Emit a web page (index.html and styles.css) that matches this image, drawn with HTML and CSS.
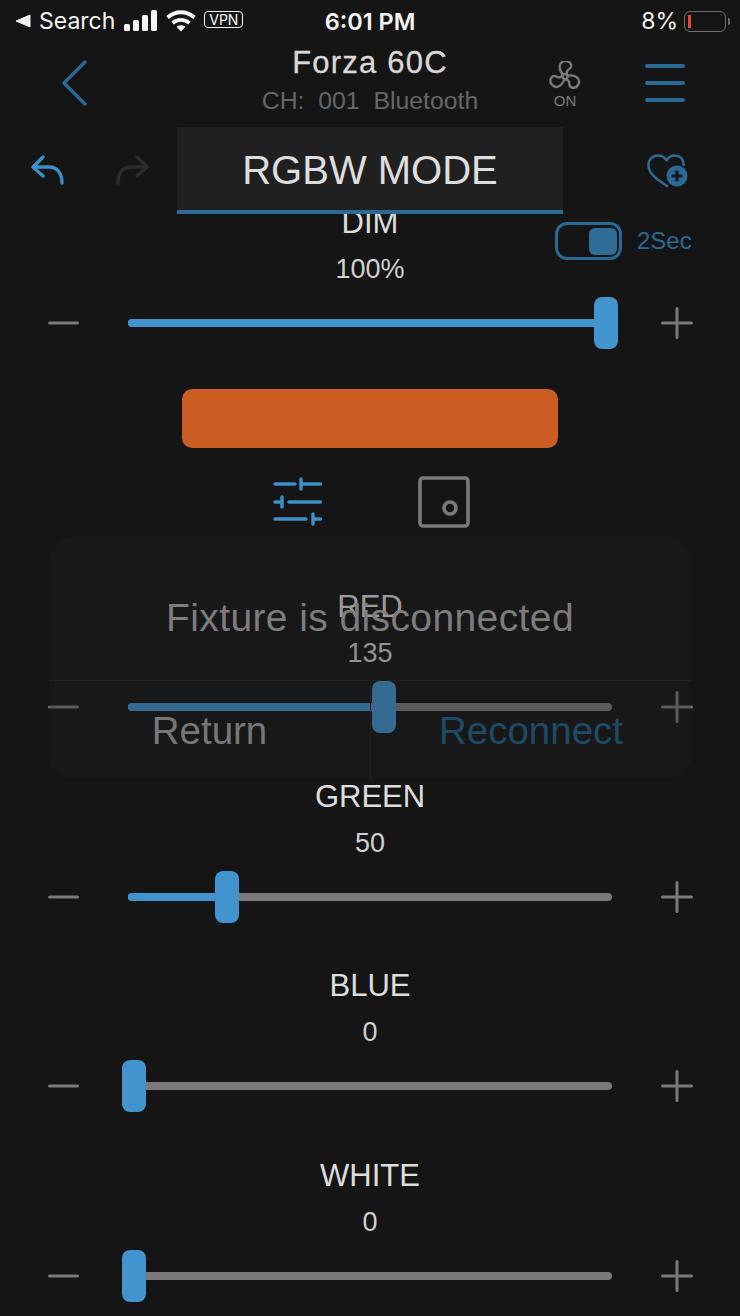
FILE: index.html
```html
<!DOCTYPE html>
<html lang="en">

<head>
    <meta charset="UTF-8">
    <meta name="viewport" content="width=device-width, initial-scale=1.0">
    <title>Forza 60C</title>
    <link rel="stylesheet" href="styles.css">
</head>

<body>
    <div class="screen">
        <div class="status-bar">
            <div class="status-left">
                <svg class="back-tri" width="16" height="14" viewBox="0 0 16 14"><path d="M15 1V13L1 7Z" fill="#f2f2f2" stroke="#f2f2f2" stroke-linejoin="round"/></svg>
                <span>Search</span>
                <svg class="signal" width="34" height="22" viewBox="0 0 34 22" fill="#f5f5f5">
                    <rect x="0" y="14" width="6" height="7" rx="1.5"/>
                    <rect x="9" y="10" width="6" height="11" rx="1.5"/>
                    <rect x="18" y="5" width="6" height="16" rx="1.5"/>
                    <rect x="27" y="0" width="6" height="21" rx="1.5"/>
                </svg>
                <svg class="wifi" width="30" height="22" viewBox="0 0 30 22" fill="none" stroke="#f5f5f5" stroke-width="3.8">
                    <path d="M1.500 7.500C9.500 0.500 20.500 0.500 28.500 7.500"/>
                    <path d="M6.500 13C11.500 8.800 18.500 8.800 23.500 13"/>
                    <path d="M15 21.500L10.500 16.800C13 14.800 17 14.800 19.500 16.800Z" fill="#f5f5f5" stroke="none"/>
                </svg>
                <span class="vpn">VPN</span>
            </div>
            <div class="status-time">6:01 PM</div>
            <div class="status-right">
                <span>8%</span>
                <div class="battery"><div class="battery-level"></div></div>
                <div class="battery-nub"></div>
            </div>
        </div>

        <div class="nav">
            <div class="nav-left">
                <svg width="26" height="46" viewBox="0 0 26 46" fill="none" stroke="#2a6a94" stroke-width="3.2" stroke-linecap="round" stroke-linejoin="round"><path d="M23 2L2 23L23 44"/></svg>
            </div>
            <div class="nav-title">
                <div class="device-name">Forza 60C</div>
                <div class="device-sub">CH:&nbsp;&nbsp;001&nbsp;&nbsp;Bluetooth</div>
            </div>
            <div class="nav-right">
                <div class="fan">
                    <svg width="32" height="30" viewBox="-15 -14.500 30 28" fill="none" stroke="#7a7a7a" stroke-width="2.2" stroke-linejoin="round">
                        <circle cx="0" cy="0" r="2.4"/>
                        <path id="blade" d="M-2 -2C-6 -6 -6.500 -14 0 -14.500C5.500 -15 7.500 -9 4 -7C2 -6 1 -4 2.300 -1.200"/>
                        <use href="#blade" transform="rotate(120)"/>
                        <use href="#blade" transform="rotate(240)"/>
                    </svg>
                    <span>ON</span>
                </div>
                <div class="menu"><i></i><i></i><i></i></div>
            </div>
        </div>

        <div class="tools">
            <svg class="undo" width="33" height="30" viewBox="0 0 33 30" fill="none" stroke="#3c8fc8" stroke-width="3.4" stroke-linecap="round" stroke-linejoin="round"><path d="M12 2L2 12L12 21M2 12H18C26 12 31 18 31 28"/></svg>
            <svg class="redo" width="33" height="30" viewBox="0 0 33 30" fill="none" stroke="#2b2b2b" stroke-width="3.4" stroke-linecap="round" stroke-linejoin="round"><path d="M21 2L31 12L21 21M31 12H15C7 12 2 18 2 28"/></svg>
            <div class="mode-tab">RGBW MODE</div>
            <svg class="fav" width="44" height="38" viewBox="0 0 44 38" fill="none" stroke="#2a6a94" stroke-width="2.6" stroke-linecap="round" stroke-linejoin="round">
                <path d="M20 33C13 28 2 22 1.500 13C1 6 6 2.500 11 2.500C15 2.500 18 4.500 19.500 7.500C21 4.500 24 2.500 28 2.500C33 2.500 37 6 36.500 12"/>
                <circle cx="30" cy="23" r="10.500" stroke="none" fill="#2a6a94"/>
                <path d="M30 17.500V28.500M24.500 23H35.500" stroke="#121a20" stroke-width="3.200" stroke-linecap="butt"/>
            </svg>
        </div>

        <div class="channel channel-dim">
            <div class="channel-name">DIM</div>
            <div class="channel-value">100%</div>
            <div class="fade-toggle">
                <div class="switch"><div class="switch-knob"></div></div>
                <span>2Sec</span>
            </div>
            <div class="slider-row">
                <svg class="step" width="31" height="32" viewBox="0 0 31 32"><path d="M1.500 16H29.500" stroke="#7a7a7a" stroke-width="3" stroke-linecap="round"/></svg>
                <div class="track">
                    <div class="fill" style="width: 478px"></div>
                    <div class="thumb" style="left: 466px"></div>
                </div>
                <svg class="step" width="32" height="32" viewBox="0 0 32 32"><path d="M1.500 16H30.500M16 1.500V30.500" stroke="#7a7a7a" stroke-width="3" stroke-linecap="round"/></svg>
            </div>
        </div>

        <div class="swatch"></div>

        <div class="mode-icons">
            <svg width="50" height="50" viewBox="0 0 50 50" fill="none" stroke="#3c8fc8" stroke-width="3.500" stroke-linecap="round">
                <path d="M2 7H22M28 2V12M28 7H47.500"/>
                <path d="M2 25H9M9 20V30M16 25H47.500"/>
                <path d="M2 42H33M40 37V47M40 42H47.500"/>
            </svg>
            <svg width="52" height="52" viewBox="0 0 52 52" fill="none" stroke="#7a7a7a" stroke-width="3.600">
                <rect x="2" y="2" width="48" height="48" rx="3"/>
                <circle cx="32" cy="32" r="6"/>
            </svg>
        </div>

        <div class="channel">
            <div class="channel-name">RED</div>
            <div class="channel-value">135</div>
            <div class="slider-row">
                <svg class="step" width="31" height="32" viewBox="0 0 31 32"><path d="M1.500 16H29.500" stroke="#7a7a7a" stroke-width="3" stroke-linecap="round"/></svg>
                <div class="track">
                    <div class="fill" style="width: 256px"></div>
                    <div class="thumb" style="left: 244px"></div>
                </div>
                <svg class="step" width="32" height="32" viewBox="0 0 32 32"><path d="M1.500 16H30.500M16 1.500V30.500" stroke="#7a7a7a" stroke-width="3" stroke-linecap="round"/></svg>
            </div>
        </div>

        <div class="channel">
            <div class="channel-name">GREEN</div>
            <div class="channel-value">50</div>
            <div class="slider-row">
                <svg class="step" width="31" height="32" viewBox="0 0 31 32"><path d="M1.500 16H29.500" stroke="#7a7a7a" stroke-width="3" stroke-linecap="round"/></svg>
                <div class="track">
                    <div class="fill" style="width: 99px"></div>
                    <div class="thumb" style="left: 87px"></div>
                </div>
                <svg class="step" width="32" height="32" viewBox="0 0 32 32"><path d="M1.500 16H30.500M16 1.500V30.500" stroke="#7a7a7a" stroke-width="3" stroke-linecap="round"/></svg>
            </div>
        </div>

        <div class="channel">
            <div class="channel-name">BLUE</div>
            <div class="channel-value">0</div>
            <div class="slider-row">
                <svg class="step" width="31" height="32" viewBox="0 0 31 32"><path d="M1.500 16H29.500" stroke="#7a7a7a" stroke-width="3" stroke-linecap="round"/></svg>
                <div class="track">
                    <div class="fill" style="width: 6px"></div>
                    <div class="thumb" style="left: -6px"></div>
                </div>
                <svg class="step" width="32" height="32" viewBox="0 0 32 32"><path d="M1.500 16H30.500M16 1.500V30.500" stroke="#7a7a7a" stroke-width="3" stroke-linecap="round"/></svg>
            </div>
        </div>

        <div class="channel">
            <div class="channel-name">WHITE</div>
            <div class="channel-value">0</div>
            <div class="slider-row">
                <svg class="step" width="31" height="32" viewBox="0 0 31 32"><path d="M1.500 16H29.500" stroke="#7a7a7a" stroke-width="3" stroke-linecap="round"/></svg>
                <div class="track">
                    <div class="fill" style="width: 6px"></div>
                    <div class="thumb" style="left: -6px"></div>
                </div>
                <svg class="step" width="32" height="32" viewBox="0 0 32 32"><path d="M1.500 16H30.500M16 1.500V30.500" stroke="#7a7a7a" stroke-width="3" stroke-linecap="round"/></svg>
            </div>
        </div>

        <div class="dialog">
            <div class="dialog-message">Fixture is disconnected</div>
            <div class="dialog-actions">
                <div class="dialog-btn">Return</div>
                <div class="dialog-btn dialog-btn-main">Reconnect</div>
            </div>
        </div>
    </div>
</body>

</html>
```

FILE: styles.css
```css
html, body {
    margin: 0;
    padding: 0;
    background-color: #151515;
}

svg {
    display: block;
}

.screen {
    position: relative;
    width: 740px;
    height: 1316px;
    overflow: hidden;
    background-color: #151515;
    font-family: "Liberation Sans", Arial, sans-serif;
    color: #dedede;
}

/* status bar */
.status-bar {
    height: 42px;
    display: grid;
    grid-template-columns: 1fr auto 1fr;
    align-items: center;
    font-family: Inter, "Liberation Sans", sans-serif;
    font-size: 23px;
    color: #f5f5f5;
}

.status-left {
    display: flex;
    align-items: center;
    padding-left: 15px;
}

.back-tri {
    margin-right: 8px;
}

.signal {
    margin-left: 9px;
}

.wifi {
    margin-left: 8px;
}

.vpn {
    margin: -3px 0 0 8px;
    width: 37px;
    height: 15px;
    border: 1.500px solid #f5f5f5;
    border-radius: 4px;
    font-size: 14px;
    line-height: 15px;
    text-align: center;
}

.status-time {
    font-size: 23.500px;
    font-weight: 600;
}

.status-right {
    display: flex;
    align-items: center;
    justify-content: flex-end;
    padding-right: 10px;
}

.battery {
    width: 36px;
    height: 15px;
    margin-left: 6px;
    padding: 2px;
    border: 1.500px solid #6f6f6f;
    border-radius: 6px;
    display: flex;
    align-items: center;
}

.battery-level {
    width: 3px;
    height: 13px;
    margin-left: 1px;
    background-color: #e8483a;
}

.battery-nub {
    width: 2px;
    height: 7px;
    margin-left: 2px;
    background-color: #6f6f6f;
    border-radius: 0 2px 2px 0;
}

/* top nav */
.nav {
    height: 85px;
    display: grid;
    grid-template-columns: 1fr auto 1fr;
}

.nav-left {
    padding: 18px 0 0 62px;
}

.nav-title {
    text-align: center;
}

.device-name {
    font-size: 31px;
    line-height: 42px;
    letter-spacing: 1.200px;
    color: #d9d9d9;
    -webkit-text-stroke: 0.3px #d9d9d9;
}

.device-sub {
    margin-top: 2px;
    font-size: 24.800px;
    line-height: 30px;
    color: #666666;
}

.nav-right {
    display: flex;
    justify-content: flex-end;
    padding: 19px 55px 0 0;
}

.fan {
    width: 32px;
    margin-right: 64px;
    text-align: center;
    color: #7a7a7a;
    font-size: 15px;
}

.fan span {
    display: block;
    margin-top: 1px;
    line-height: 17px;
}

.menu {
    width: 40px;
    height: 38px;
    margin-top: 3px;
    display: flex;
    flex-direction: column;
    justify-content: space-between;
}

.menu i {
    display: block;
    height: 4px;
    border-radius: 2px;
    background-color: #2a6a94;
}

/* undo, redo, mode tab */
.tools {
    position: relative;
    z-index: 1;
    height: 87px;
    margin-bottom: -8px;
    display: flex;
    padding-left: 31px;
    align-items: flex-start;
}

.undo {
    margin-top: 28px;
}

.redo {
    margin: 28px 0 0 52px;
}

.mode-tab {
    width: 386px;
    height: 83px;
    margin-left: 28px;
    border-bottom: 4px solid #2a6a94;
    background-color: #202020;
    font-size: 40px;
    line-height: 87px;
    text-align: center;
    color: #dedede;
}

.fav {
    margin: 26px 0 0 84px;
}

/* channels */
.channel {
    position: relative;
    height: 144px;
    margin-bottom: 45.500px;
}

.channel-dim {
    margin-bottom: 39px;
}

.channel-name {
    height: 34px;
    font-size: 31px;
    line-height: 34px;
    text-align: center;
    color: #dedede;
}

.channel-value {
    height: 34px;
    margin-top: 12px;
    font-size: 27px;
    line-height: 34px;
    text-align: center;
    color: #d0d0d0;
}

.slider-row {
    height: 52px;
    margin-top: 11px;
    padding-left: 48px;
    display: grid;
    grid-template-columns: 31px 484px 32px;
    column-gap: 49px;
    align-items: center;
}

.track {
    position: relative;
    height: 8px;
    border-radius: 4px;
    background-color: #7a7a7a;
}

.fill {
    height: 8px;
    border-radius: 4px 0 0 4px;
    background-color: #4194cd;
}

.thumb {
    position: absolute;
    top: -22px;
    width: 24px;
    height: 52px;
    border-radius: 8px;
    background-color: #4194cd;
}

/* fade switch next to DIM */
.fade-toggle {
    position: absolute;
    top: 16px;
    left: 555px;
    display: flex;
    align-items: center;
    color: #2a6a94;
    font-size: 24px;
}

.switch {
    width: 57px;
    height: 27px;
    margin-right: 15px;
    padding: 2.500px 2px;
    border: 3.500px solid #2a6a94;
    border-radius: 12px;
    display: flex;
    justify-content: flex-end;
}

.switch-knob {
    width: 28px;
    height: 27px;
    border-radius: 6px;
    background-color: #2f6d96;
}

.swatch {
    width: 376px;
    height: 59px;
    margin-left: 182px;
    border-radius: 10px;
    background-color: #cb5c22;
}

.mode-icons {
    height: 52px;
    margin: 28px 0 62px;
    padding-left: 273px;
    display: flex;
    gap: 95px;
    align-items: center;
}

/* disconnected dialog, lies over the RED slider */
.dialog {
    position: absolute;
    top: 538px;
    left: 49px;
    z-index: 2;
    width: 642px;
    height: 240px;
    border-radius: 22px;
    background-color: rgba(32, 32, 32, 0.35);
    display: flex;
    flex-direction: column;
}

.dialog-message {
    height: 142px;
    border-bottom: 1px solid #202020;
    font-size: 39px;
    letter-spacing: 0.400px;
    line-height: 160px;
    text-align: center;
    color: #7d7d7d;
}

.dialog-actions {
    flex: 1;
    display: grid;
    grid-template-columns: 1fr 1fr;
}

.dialog-btn {
    font-size: 38.500px;
    line-height: 100px;
    text-align: center;
    color: #777777;
}

.dialog-btn-main {
    border-left: 1px solid #202020;
    color: #1d4a66;
}
```
